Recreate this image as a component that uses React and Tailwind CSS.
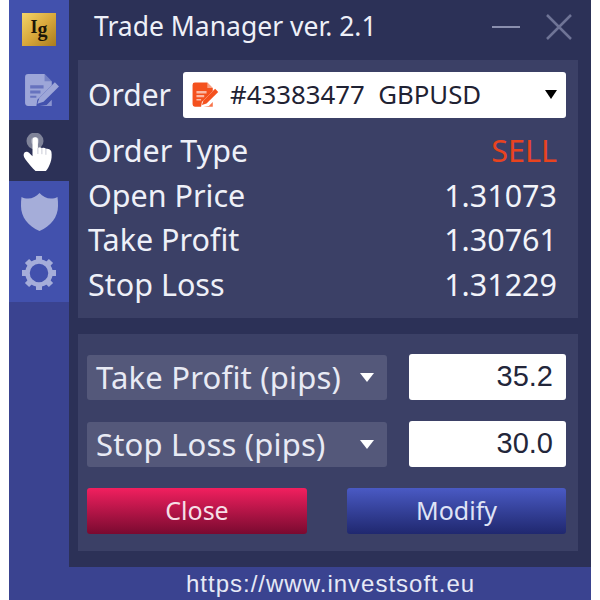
const sans = { fontFamily: '"Noto Sans", sans-serif' }

// page-with-pencil icon, used in the sidebar and in the order select
function OrderIcon({ className, cut }) {
  return (
    <svg className={className} viewBox="0 0 36 36">
      <path fill="currentColor" d="M2 5a3 3 0 0 1 3-3h16l7 7v4L14 27l-1 6H5a3 3 0 0 1-3-3z" />
      <path fill={cut} d="M7 13h13v3H7zM7 18h10v3H7zM7 23h6v2H7z" opacity="0.6" />
      <path fill={cut} d="M21 2v7h7z" opacity="0.45" />
      <path fill="currentColor" d="M31 10l4 4-15 15-6 2 2-6z" />
      <path fill="currentColor" d="M16 33h12v-6l-5 5z" opacity="0.8" />
    </svg>
  )
}

function Field({ label, value, valueClass = 'text-[#f2f4fa]' }) {
  return (
    <div className="flex items-center justify-between h-[44.5px]">
      <span className="text-[30.5px] text-[#eef0f8]">{label}</span>
      <span className={`text-[30.5px] ${valueClass}`}>{value}</span>
    </div>
  )
}

function PipsRow({ label, value }) {
  return (
    <div className="flex items-center justify-between">
      <div className="flex items-center justify-between w-[300px] h-[45px] rounded-[3px] bg-[#54587a] pl-[9px] pr-[13px]">
        <span className="text-[31px] tracking-[0.2px] mt-[1px] text-[#e8eaf4]">{label}</span>
        <span className="w-0 h-0 border-x-[7px] border-x-transparent border-t-[9px] border-t-white" />
      </div>
      <div
        className="flex items-center justify-end w-[157px] h-[46px] rounded-[3px] bg-white pr-[13px] text-[29px] text-[#23263a]"
        style={{ fontFamily: '"Liberation Sans", sans-serif' }}
      >
        {value}
      </div>
    </div>
  )
}

export default function App() {
  return (
    <div className="w-[600px] h-[600px] bg-white px-[9px] overflow-hidden">
      <div className="flex h-full bg-[#2c3157]" style={sans}>

        {/* Sidebar */}
        <div className="w-[60px] flex flex-col bg-[#3a4390]">
          <div className="h-[60px] bg-[#4251ad] flex items-start justify-center pt-[13px]">
            <div
              className="w-[34px] h-[33px] flex items-center justify-center bg-gradient-to-br from-[#f3d468] via-[#d9a93c] to-[#a97c1f] text-[#1c1608] text-[18px] font-bold"
              style={{ fontFamily: '"Liberation Serif", serif' }}
            >
              <span className="-mt-[5px]">I</span>
              <span className="text-[20px] -mt-[1px]">g</span>
            </div>
          </div>
          <div className="h-[60px] bg-[#4251ad] flex items-center justify-center pl-[4px]">
            <OrderIcon className="w-[37px] h-[37px] text-[#9da6d8]" cut="#4251ad" />
          </div>
          <div className="h-[61px] bg-[#2c3157] flex items-center justify-center">
            <svg className="w-[34px] h-[40px] mt-[4px]" viewBox="0 0 34 40">
              <circle cx="13" cy="8" r="8.500" fill="#7f8399" />
              <circle cx="13" cy="8" r="4" fill="#a0a3b5" />
              <path
                fill="#ffffff"
                d="M10.500 7a2.700 2.700 0 0 1 5.400 0v8c1.500-1 3-.8 4 .2 1.500-.8 3-.5 4 .6 2-.6 5 .5 5.500 3 .6 3.500.2 8-1 11-1 3-3 6.700-4.500 8.200H13.500C10 35 7 31 3.500 26.500 1.500 24 1 21 2.500 19.500c1.500-1.300 3.500-.8 5 .7l3 3z"
              />
              <path stroke="#c9cbd6" strokeWidth="1" d="M15.900 15v6M19.900 15.200v6M23.900 15.800v6" />
            </svg>
          </div>
          <div className="h-[61px] bg-[#4251ad] flex items-center justify-center">
            <svg className="w-[37px] h-[38px] text-[#a5add9]" viewBox="0 0 37 38">
              <path fill="currentColor" d="M18.5 0c3 3.5 7 5.500 11.500 5.500 2.500 0 4.500-.5 6.500-1.500.5 3 .5 6 .5 9 0 11-7 20-18.500 25C7 33 0 24 0 13c0-3 0-6 .5-9 2 1 4 1.500 6.500 1.500C11.500 5.500 15.500 3.500 18.500 0z" />
            </svg>
          </div>
          <div className="h-[60px] bg-[#4251ad] flex items-center justify-center pt-[2px]">
            <svg className="w-[38px] h-[38px] text-[#a5add9]" viewBox="0 0 38 38">
              <circle cx="19" cy="19" r="11.500" fill="none" stroke="currentColor" strokeWidth="4.500" />
              <g stroke="currentColor" strokeWidth="6">
                <path d="M19 2v5M19 31v5M2 19h5M31 19h5M7 7l3.500 3.500M27.500 27.500l3.500 3.500M31 7l-3.500 3.500M10.500 27.500l-3.500 3.500" />
              </g>
            </svg>
          </div>
        </div>

        {/* Main column */}
        <div className="flex-1 flex flex-col">
          <div className="h-[60px] shrink-0 flex items-center justify-between pl-[25px] pr-[19px] pb-[6px]">
            <span className="text-[26.500px] text-[#eef0f8]">Trade Manager ver. 2.1</span>
            <div className="flex items-center gap-[26px]">
              <span className="block w-[28px] h-[2px] bg-[#8a8fae]" />
              <svg className="w-[26px] h-[26px] text-[#6f7496]" viewBox="0 0 26 26">
                <path d="M1 1l24 24M25 1L1 25" stroke="currentColor" strokeWidth="2.500" />
              </svg>
            </div>
          </div>

          {/* Order panel */}
          <div className="ml-[9px] mr-[13px] h-[258px] shrink-0 bg-[#3b4066] pl-[10px] pr-[21px]">
            <div className="flex items-center justify-between h-[69px] -mr-[9px]">
              <span className="text-[30px] text-[#eef0f8]">Order</span>
              <div className="flex items-center w-[383px] h-[46px] rounded-[3px] bg-white pl-[8px] pr-[9px] text-[#1f2233]">
                <OrderIcon className="w-[28px] h-[28px] text-[#f4511e]" cut="#ffffff" />
                <span className="ml-[11px] text-[25.800px] whitespace-pre flex-1">#43383477  GBPUSD</span>
                <span className="w-0 h-0 border-x-[6px] border-x-transparent border-t-[9px] border-t-black" />
              </div>
            </div>
            <Field label="Order Type" value="SELL" valueClass="text-[#e8431f]" />
            <Field label="Open Price" value="1.31073" />
            <Field label="Take Profit" value="1.30761" />
            <Field label="Stop Loss" value="1.31229" />
          </div>

          {/* Modify panel */}
          <div className="ml-[9px] mr-[13px] mt-[16px] h-[217px] shrink-0 bg-[#3b4066] pt-[20px] px-[9px] pr-[12px] flex flex-col">
            <div className="flex flex-col gap-[21px]">
              <PipsRow label="Take Profit (pips)" value="35.2" />
              <PipsRow label="Stop Loss (pips)" value="30.0" />
            </div>
            <div className="flex justify-between mt-[21px]">
              <button className="w-[220px] h-[46px] rounded-[3px] bg-gradient-to-b from-[#f2205f] to-[#7a0a30] text-[25px] text-[#f6dfe6]">
                Close
              </button>
              <button className="w-[219px] h-[46px] rounded-[3px] bg-gradient-to-b from-[#4a5ac4] to-[#20286f] text-[25px] text-[#dfe3f6]">
                Modify
              </button>
            </div>
          </div>

          {/* Footer */}
          <div
            className="mt-[16px] flex-1 flex items-center pl-[117px] bg-[#3a4390] text-[24px] leading-none tracking-[1px] text-[#e6e9f6]"
            style={{ fontFamily: '"Liberation Sans", sans-serif' }}
          >
            https://www.investsoft.eu
          </div>
        </div>
      </div>
    </div>
  )
}
